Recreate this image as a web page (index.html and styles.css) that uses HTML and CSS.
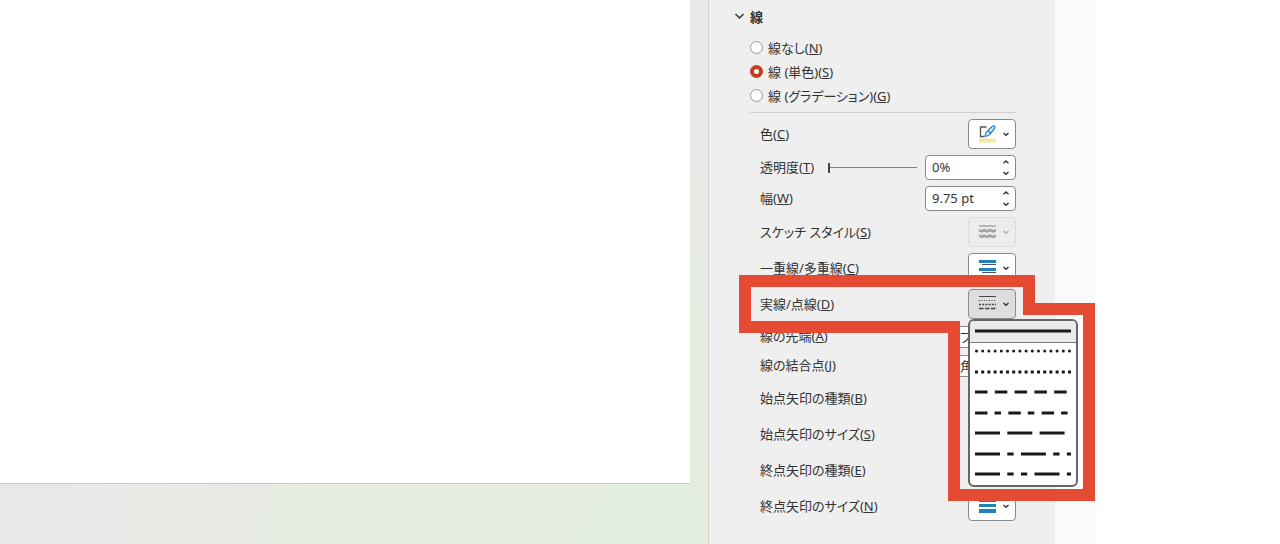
FILE: index.html
```html
<!DOCTYPE html>
<html lang="ja">
<head>
    <meta charset="UTF-8">
    <meta name="viewport" content="width=device-width, initial-scale=1.0">
    <title>図形の書式設定</title>
    <link rel="stylesheet" href="styles.css">
</head>
<body>
    <svg width="0" height="0" class="defs">
        <symbol id="chevron" viewBox="0 0 8 8"><path d="M1.5 3 L4 5.2 L6.5 3" fill="none" stroke="currentColor" stroke-width="1.4"/></symbol>
        <symbol id="up" viewBox="0 0 8 8"><path d="M1.5 5.2 L4 3 L6.5 5.2" fill="none" stroke="currentColor" stroke-width="1.4"/></symbol>
        <symbol id="bars" viewBox="0 0 18 18">
            <path d="M1 4h17" stroke="#5b6b7a" stroke-width="2"/>
            <path d="M1 8.5h17" stroke="#2080c0" stroke-width="3"/>
            <path d="M1 14h17" stroke="#2080c0" stroke-width="4"/>
        </symbol>
    </svg>

    <div class="app">
        <main class="workspace">
            <div class="slide"></div>
        </main>

        <aside class="panel">
            <button class="section-title" type="button">
                <svg width="12" height="12" viewBox="0 0 12 12"><path d="M1.5 4 L5.5 8 L9.5 4" fill="none" stroke="#333" stroke-width="1.5"/></svg>
                線
            </button>

            <div class="section">
                <div class="radios">
                    <label><input type="radio" name="line"> <span>線なし(<u>N</u>)</span></label>
                    <label><input type="radio" name="line" checked> <span>線 (単色)(<u>S</u>)</span></label>
                    <label><input type="radio" name="line"> <span>線 (グラデーション)(<u>G</u>)</span></label>
                </div>

                <div class="rows">
                    <div class="row">
                        <label for="color">色(<u>C</u>)</label>
                        <button id="color" class="drop" type="button">
                            <svg width="18" height="18" viewBox="0 0 18 18">
                                <path d="M8.5 2H2.5V11.5H6" fill="none" stroke="#555" stroke-width="1.3"/>
                                <path d="M7 11.5 Q7 8 9.5 6 L14 1.5 Q17.5 0 16.8 3 L13 8 Q11 11 7 11.5 Z M10 5.500 L13 8.500" fill="#dceefb" stroke="#2a84cc" stroke-width="1.3"/>
                                <path d="M1 13.500h17v4H1z" fill="#f0e9a0"/>
                            </svg>
                            <svg class="arrow"><use href="#chevron"/></svg>
                        </button>
                    </div>
                    <div class="row small">
                        <label for="opacity">透明度(<u>T</u>)</label>
                        <input type="range" class="slider" min="0" max="100" value="0" aria-label="透明度">
                        <div class="spin">
                            <input id="opacity" type="text" value="0%">
                            <div class="steps">
                                <button type="button" aria-label="増やす"><svg><use href="#up"/></svg></button>
                                <button type="button" aria-label="減らす"><svg><use href="#chevron"/></svg></button>
                            </div>
                        </div>
                    </div>
                    <div class="row small">
                        <label for="width">幅(<u>W</u>)</label>
                        <div class="spin">
                            <input id="width" type="text" value="9.75 pt">
                            <div class="steps">
                                <button type="button" aria-label="増やす"><svg><use href="#up"/></svg></button>
                                <button type="button" aria-label="減らす"><svg><use href="#chevron"/></svg></button>
                            </div>
                        </div>
                    </div>
                    <div class="row">
                        <label for="sketch">スケッチ スタイル(<u>S</u>)</label>
                        <button id="sketch" class="drop" type="button" disabled>
                            <svg width="18" height="18" viewBox="0 0 18 18" fill="none" stroke="#999" stroke-width="1.2">
                                <path d="M1 2.5l3 1l2-1l3 1l3-1l3 1l3-1"/>
                                <path d="M1 6.5l3 1l2-1l3 1l3-1l3 1l3-1"/>
                                <path d="M1 8l3 1l2-1l3 1l3-1l3 1l3-1"/>
                                <path d="M1 12l3 1l2-1l3 1l3-1l3 1l3-1"/>
                                <path d="M1 13.500l3 1l2-1l3 1l3-1l3 1l3-1"/>
                            </svg>
                            <svg class="arrow"><use href="#chevron"/></svg>
                        </button>
                    </div>
                    <div class="row">
                        <label for="compound">一重線/多重線(<u>C</u>)</label>
                        <button id="compound" class="drop" type="button">
                            <svg width="18" height="18" viewBox="0 0 18 18">
                                <path d="M1 2.5h17M1 10.5h17" stroke="#2080c0" stroke-width="3"/>
                                <path d="M4 5.5h14M4 13.5h14" stroke="#445566" stroke-width="1"/>
                            </svg>
                            <svg class="arrow"><use href="#chevron"/></svg>
                        </button>
                    </div>
                    <div class="row current">
                        <label for="dash">実線/点線(<u>D</u>)</label>
                        <button id="dash" class="drop open" type="button">
                            <svg width="18" height="18" viewBox="0 0 18 18" fill="none" stroke="#444">
                                <path d="M1 1.5h17"/>
                                <path d="M1 5.5h17" stroke-dasharray="1 1.5"/>
                                <path d="M1 9.5h17" stroke-width="1.3" stroke-dasharray="2 1.2"/>
                                <path d="M1 13.5h17" stroke-width="1.3" stroke-dasharray="4.5 1.5"/>
                            </svg>
                            <svg class="arrow"><use href="#chevron"/></svg>
                        </button>

                        <div class="dash-menu">
                            <button type="button" class="selected" aria-label="実線"><svg viewBox="0 0 96 4"><path d="M0 2h96"/></svg></button>
                            <button type="button" aria-label="点線 (丸)"><svg viewBox="0 0 96 4"><path d="M1.5 2h94.5" stroke-linecap="round" stroke-dasharray="0 6.2"/></svg></button>
                            <button type="button" aria-label="点線 (角)"><svg viewBox="0 0 96 4"><path d="M0 2h96" stroke-dasharray="3 3.2"/></svg></button>
                            <button type="button" aria-label="破線"><svg viewBox="0 0 96 4"><path d="M0 2h96" stroke-dasharray="12.5 7.3"/></svg></button>
                            <button type="button" aria-label="一点鎖線"><svg viewBox="0 0 96 4"><path d="M0 2h96" stroke-dasharray="12.5 7 6.5 7.3"/></svg></button>
                            <button type="button" aria-label="長破線"><svg viewBox="0 0 96 4"><path d="M0 2h90" stroke-dasharray="25 7.3"/></svg></button>
                            <button type="button" aria-label="長鎖線"><svg viewBox="0 0 96 4"><path d="M0 2h96" stroke-dasharray="25 7.3 6.3 7.3"/></svg></button>
                            <button type="button" aria-label="長二点鎖線"><svg viewBox="0 0 96 4"><path d="M0 2h96" stroke-dasharray="25 7.3 6.3 7.3 6.3 7.3"/></svg></button>
                        </div>

                        <!-- red outline round the row and its menu -->
                        <svg class="marker" width="356" height="226" viewBox="0 0 356 226">
                            <path d="M6 6H290V34H350V220H215V52H6Z" fill="none" stroke="#e54b32" stroke-width="12"/>
                        </svg>
                    </div>
                    <div class="row select-row">
                        <label for="cap">線の先端(<u>A</u>)</label>
                        <select id="cap"><option>フラット</option></select>
                    </div>
                    <div class="row select-row">
                        <label for="join">線の結合点(<u>J</u>)</label>
                        <select id="join"><option>角</option></select>
                    </div>
                    <div class="row">
                        <label for="begin-type">始点矢印の種類(<u>B</u>)</label>
                        <button id="begin-type" class="drop" type="button"><svg width="18" height="18"><use href="#bars"/></svg><svg class="arrow"><use href="#chevron"/></svg></button>
                    </div>
                    <div class="row">
                        <label for="begin-size">始点矢印のサイズ(<u>S</u>)</label>
                        <button id="begin-size" class="drop" type="button"><svg width="18" height="18"><use href="#bars"/></svg><svg class="arrow"><use href="#chevron"/></svg></button>
                    </div>
                    <div class="row">
                        <label for="end-type">終点矢印の種類(<u>E</u>)</label>
                        <button id="end-type" class="drop" type="button"><svg width="18" height="18"><use href="#bars"/></svg><svg class="arrow"><use href="#chevron"/></svg></button>
                    </div>
                    <div class="row">
                        <label for="end-size">終点矢印のサイズ(<u>N</u>)</label>
                        <button id="end-size" class="drop" type="button"><svg width="18" height="18"><use href="#bars"/></svg><svg class="arrow"><use href="#chevron"/></svg></button>
                    </div>
                </div>
            </div>
        </aside>
        <div class="rail"></div>
        <div class="margin"></div>
    </div>
</body>
</html>
```

FILE: styles.css
```css
* {
    box-sizing: border-box;
}

body {
    margin: 0;
    font-family: "Noto Sans", "Noto Sans CJK JP", sans-serif;
    font-size: 13px;
    font-feature-settings: "palt";
    color: #333;
    background: #fff;
}

button,
input,
select {
    font: inherit;
    color: inherit;
    margin: 0;
}

button {
    padding: 0;
    border: none;
    background: none;
}

.defs {
    position: absolute;
}

.app {
    display: flex;
    height: 100vh;
    overflow: hidden;
}

.workspace {
    flex: 1;
    padding: 0 18px 60px 0;
    background: radial-gradient(ellipse 90% 75% at 100% 100%, #e3efde 0%, #e6ece1 60%, #e9e8e7 100%);
}

.slide {
    height: 100%;
    background: #fff;
    border-bottom: 1px solid #c6cec6;
}

.panel {
    width: 347px;
    padding: 6px 39px 0 25px;
    background: #efefef;
    border-left: 1px solid #cfd1cf;
}

.rail {
    width: 40px;
    background: #fafafa;
}

.margin {
    width: 185px;
}

.section-title {
    display: flex;
    align-items: center;
    gap: 4px;
    height: 20px;
    font-weight: bold;
}

.section {
    padding: 9px 0 0 16px;
}

.radios {
    padding-bottom: 5px;
    border-bottom: 1px solid #cfcfcf;
}

.radios label {
    display: flex;
    align-items: center;
    gap: 5px;
    height: 24px;
}

.radios input {
    appearance: none;
    width: 13px;
    height: 13px;
    border: 1px solid #999;
    border-radius: 50%;
    background: #fff;
}

.radios input:checked {
    border: 4px solid #c43e1c;
}

.rows {
    display: flex;
    flex-direction: column;
    gap: 6px;
    padding: 6px 0 0 10px;
}

.row {
    display: flex;
    align-items: center;
    justify-content: space-between;
    height: 30px;
}

.row label {
    line-height: 20px;
    padding-bottom: 1px;
    white-space: nowrap;
}

.row.small {
    height: 25px;
}

.row.select-row {
    height: 23px;
}

.current {
    position: relative;
    z-index: 1;
}

.drop {
    display: flex;
    align-items: center;
    justify-content: space-between;
    width: 48px;
    height: 30px;
    padding: 0 5px 0 9px;
    background: #fff;
    border: 1px solid #8a8a8a;
    border-radius: 4px;
}

.drop.open {
    background: #dedede;
}

.drop:disabled {
    background: #ededed;
    border-color: #dcdcdc;
}

.drop:disabled .arrow {
    color: #b0b0b0;
}

.arrow {
    width: 8px;
    height: 8px;
}

.slider {
    appearance: none;
    flex: 1;
    min-width: 0;
    height: 10px;
    margin: 0 8px 0 14px;
    background: linear-gradient(#808080, #808080) center / 100% 1px no-repeat;
}

.slider::-webkit-slider-thumb {
    appearance: none;
    width: 2px;
    height: 10px;
    background: #444;
}

.spin {
    display: flex;
    width: 91px;
    height: 25px;
    background: #fff;
    border: 1px solid #8a8a8a;
    border-radius: 4px;
}

.spin input {
    flex: 1;
    min-width: 0;
    padding: 0 0 2px 6px;
    border: none;
    background: none;
}

.steps {
    display: flex;
    flex-direction: column;
    justify-content: space-evenly;
    width: 13px;
}

.steps button,
.steps svg {
    display: block;
    width: 8px;
    height: 8px;
}

.select-row select {
    appearance: none;
    width: 67px;
    height: 22px;
    padding: 0 0 0 10px;
    background: #fff;
    border: 1px solid #8a8a8a;
    border-radius: 4px;
}

.dash-menu {
    position: absolute;
    top: 100%;
    right: -62px;
    z-index: 2;
    display: flex;
    flex-direction: column;
    width: 110px;
    height: 168px;
    background: #fff;
    border: 2px solid #666;
    border-radius: 6px;
    overflow: hidden;
}

.dash-menu button {
    display: flex;
    align-items: center;
    flex: 1 1 0;
    padding: 0 5px 1px;
}

.dash-menu .selected {
    background: #eaeaea;
    box-shadow: 0 1px #777;
}

.dash-menu svg {
    width: 96px;
    height: 4px;
    fill: none;
    stroke: #1a1a1a;
    stroke-width: 3;
}

.marker {
    position: absolute;
    top: -14px;
    left: -21px;
    pointer-events: none;
}
```
